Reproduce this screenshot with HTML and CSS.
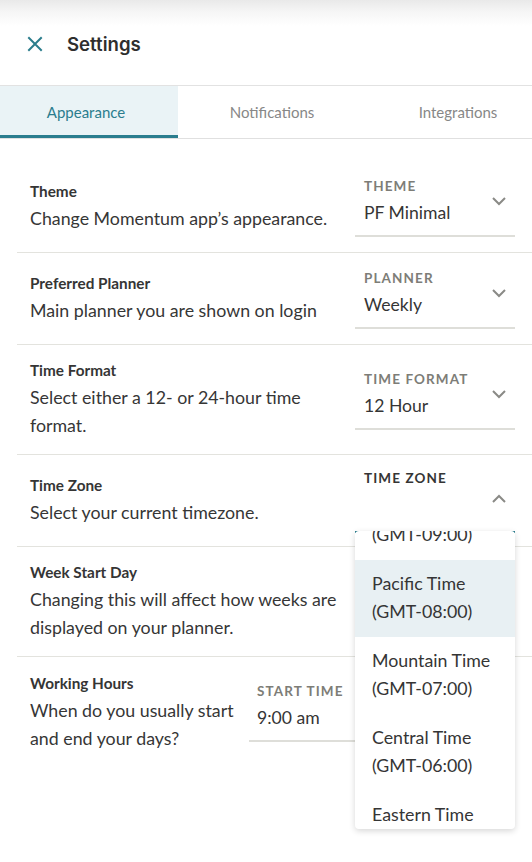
FILE: index.html
```html
<!DOCTYPE html>
<html lang="en">
<head>
<meta charset="utf-8">
<title>Settings</title>
<link rel="stylesheet" href="styles.css">
</head>
<body>
<div class="panel">
  <header class="header">
    <svg class="close" width="16" height="16" viewBox="0 0 16 16" aria-hidden="true">
      <path d="M2 2 L14 14 M14 2 L2 14" stroke="#2b7d8c" stroke-width="2" stroke-linecap="square" fill="none"/>
    </svg>
    <h1 class="title">Settings</h1>
  </header>

  <nav class="tabs">
    <div class="tab tab-active">Appearance</div>
    <div class="tab tab-mid">Notifications</div>
    <div class="tab tab-last">Integrations</div>
  </nav>

  <div class="rows">
    <div class="row">
      <div class="info">
        <div class="name">Theme</div>
        <div class="desc">Change Momentum app’s appearance.</div>
      </div>
      <div class="select">
        <div class="label">THEME</div>
        <div class="value">PF Minimal</div>
        <svg class="chev" width="16" height="10" viewBox="0 0 16 10"><path d="M2 2 L8 8 L14 2" stroke="#8a8a86" stroke-width="2" fill="none"/></svg>
      </div>
    </div>

    <div class="row">
      <div class="info">
        <div class="name">Preferred Planner</div>
        <div class="desc">Main planner you are shown on login</div>
      </div>
      <div class="select">
        <div class="label">PLANNER</div>
        <div class="value">Weekly</div>
        <svg class="chev" width="16" height="10" viewBox="0 0 16 10"><path d="M2 2 L8 8 L14 2" stroke="#8a8a86" stroke-width="2" fill="none"/></svg>
      </div>
    </div>

    <div class="row">
      <div class="info">
        <div class="name">Time Format</div>
        <div class="desc">Select either a 12- or 24-hour time format.</div>
      </div>
      <div class="select">
        <div class="label">TIME FORMAT</div>
        <div class="value">12 Hour</div>
        <svg class="chev" width="16" height="10" viewBox="0 0 16 10"><path d="M2 2 L8 8 L14 2" stroke="#8a8a86" stroke-width="2" fill="none"/></svg>
      </div>
    </div>

    <div class="row">
      <div class="info">
        <div class="name">Time Zone</div>
        <div class="desc">Select your current timezone.</div>
      </div>
      <div class="select select-open">
        <div class="label label-dark">TIME ZONE</div>
        <div class="value value-open">&nbsp;</div>
        <svg class="chev chev-up" width="16" height="10" viewBox="0 0 16 10"><path d="M2 8 L8 2 L14 8" stroke="#8a8a86" stroke-width="2" fill="none"/></svg>
        <div class="menu">
          <ul class="menu-list">
            <li class="opt">Alaska Time<br>(GMT-09:00)</li>
            <li class="opt opt-hi">Pacific Time<br>(GMT-08:00)</li>
            <li class="opt">Mountain Time<br>(GMT-07:00)</li>
            <li class="opt">Central Time<br>(GMT-06:00)</li>
            <li class="opt">Eastern Time<br>(GMT-05:00)</li>
          </ul>
        </div>
      </div>
    </div>

    <div class="row">
      <div class="info">
        <div class="name">Week Start Day</div>
        <div class="desc">Changing this will affect how weeks are displayed on your planner.</div>
      </div>
    </div>

    <div class="row row-hours">
      <div class="info info-narrow">
        <div class="name">Working Hours</div>
        <div class="desc">When do you usually start and end your days?</div>
      </div>
      <div class="select select-small">
        <div class="label">START TIME</div>
        <div class="value">9:00 am</div>
      </div>
    </div>
  </div>
</div>
</body>
</html>
```

FILE: styles.css
```css
* { box-sizing: border-box; }

html, body {
  margin: 0;
  padding: 0;
  background: #ffffff;
}

body {
  font-family: "Lato", "Noto Sans", sans-serif;
  color: #353535;
  width: 532px;
  height: 862px;
  overflow: hidden;
}

.panel {
  width: 532px;
}

.header {
  height: 86px;
  display: flex;
  align-items: center;
  padding: 0 0 0 27px;
  background: linear-gradient(to bottom, #e9e9e9 0px, #f6f6f6 12px, #ffffff 26px);
  border-bottom: 1px solid #e2e2e2;
}

.close {
  display: block;
  margin-top: 2px;
}

.title {
  margin: 0 0 0 24px;
  font-family: "Inter", "Noto Sans", sans-serif;
  font-weight: 600;
  font-size: 18.6px;
  color: #2e2e2e;
  line-height: 1;
  padding-top: 4px;
}

.tabs {
  display: flex;
  height: 53px;
  border-bottom: 1px solid #e0e0e0;
  overflow: hidden;
}

.tab {
  display: flex;
  align-items: center;
  justify-content: center;
  font-size: 15px;
  color: #878787;
  height: 52px;
  flex: none;
}

.tab-active {
  background: #eaf3f6;
  color: #2a7d8e;
  border-bottom: 3px solid #2a7d8e;
  padding-top: 3px;
  margin-left: -6px;
  width: 184px;
}

.tab-mid { width: 188px; }
.tab-last { width: 184px; }

.rows {
  padding-top: 21px;
}

.row {
  display: flex;
  align-items: center;
  justify-content: space-between;
  margin-left: 17px;
  padding: 15px 17px 15px 13px;
  border-top: 1px solid #e3e3de;
  min-height: 92px;
}

.row:first-child {
  border-top: none;
}

.row-hours {
  justify-content: flex-start;
  align-items: flex-start;
  padding-top: 16px;
}

.info {
  width: 310px;
}

.info-narrow {
  width: 219px;
}

.name {
  font-weight: 700;
  font-size: 15.3px;
  line-height: 20px;
  color: #353535;
}

.desc {
  font-size: 17.8px;
  line-height: 28px;
  margin-top: 3px;
  color: #363636;
}

.select {
  position: relative;
  width: 160px;
  flex: none;
  padding: 0 0 8px 9px;
  border-bottom: 2px solid #deded9;
}

.label {
  font-weight: 700;
  font-size: 13.5px;
  letter-spacing: 1.1px;
  line-height: 20px;
  color: #7d7d77;
}

.label-dark {
  color: #353535;
}

.value {
  font-size: 17.6px;
  line-height: 28px;
  margin-top: 3px;
  color: #353535;
}

.value-open {
  margin-top: 7px;
}

.chev {
  position: absolute;
  right: 8px;
  top: 20px;
}

.chev-up {
  top: 26px;
}

.select-open {
  margin-top: -2px;
  margin-bottom: -2px;
  border-bottom-color: #2a7d8e;
}

.menu {
  position: absolute;
  left: 0;
  top: 63px;
  width: 160px;
  height: 298px;
  background: #ffffff;
  border-radius: 4px;
  box-shadow: 0 2px 6px rgba(0, 0, 0, 0.16);
  overflow: hidden;
  z-index: 5;
}

.menu-list {
  list-style: none;
  margin: -48px 0 0 0;
  padding: 0;
}

.opt {
  padding: 9px 10px 12px 17px;
  font-size: 17.8px;
  line-height: 28px;
  color: #353535;
}

.opt-hi {
  background: #e8f0f3;
}

.select-small {
  width: 200px;
  margin-top: 8px;
  padding-left: 8px;
}
```
